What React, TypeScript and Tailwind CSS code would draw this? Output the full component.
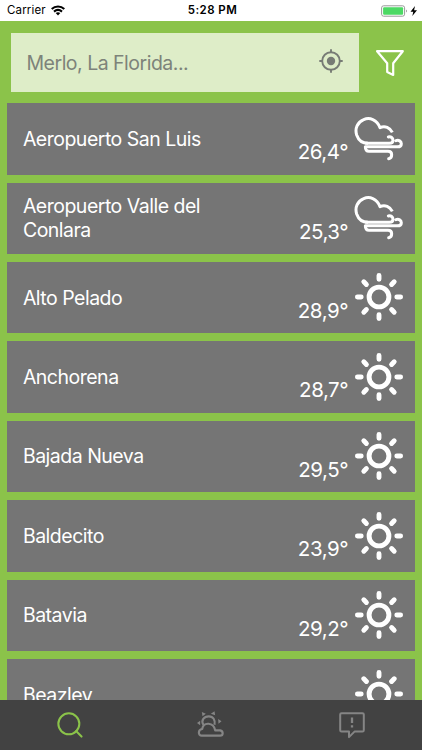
import React from "react";

type Weather = "sun" | "wind";
type Station = { name: string; temp: string; weather: Weather };

const stations: Station[] = [
  { name: "Aeropuerto San Luis", temp: "26,4°", weather: "wind" },
  { name: "Aeropuerto Valle del Conlara", temp: "25,3°", weather: "wind" },
  { name: "Alto Pelado", temp: "28,9°", weather: "sun" },
  { name: "Anchorena", temp: "28,7°", weather: "sun" },
  { name: "Bajada Nueva", temp: "29,5°", weather: "sun" },
  { name: "Baldecito", temp: "23,9°", weather: "sun" },
  { name: "Batavia", temp: "29,2°", weather: "sun" },
  { name: "Beazley", temp: "", weather: "sun" },
];

function SunIcon() {
  return (
    <svg viewBox="0 0 50 50" className="size-[50px]" fill="none" stroke="white" strokeLinecap="round">
      <circle cx="25" cy="25" r="9.9" strokeWidth="4.9" />
      <path
        strokeWidth="4.9"
        d="M25 3.4V7.2M25 42.8V46.6M3.4 25H7.2M42.8 25H46.6M9.8 9.8L12.4 12.4M37.6 37.6L40.2 40.2M40.2 9.8L37.6 12.4M12.4 37.6L9.8 40.2"
      />
    </svg>
  );
}

function WindIcon() {
  return (
    <svg viewBox="192 42 150 150" className="size-[50px]" fill="none" stroke="white" strokeWidth="9" strokeLinejoin="round">
      <path d="M307 97C300 83 285 76 270 83C261 58 238 51 221 59C202 67 194 86 200 105C206 122 218 130 234 130" />
      <path strokeLinecap="round" d="M295 111C303 109 309 114 309 121C309 127 305 130 298 130H228M318 122C326 119 334 124 334 131C334 137 329 140.5 322 140.5H226C226 150 230 154 237 154H294C301 154 305 158 305 164C305 172 301 175 296 176" />
    </svg>
  );
}

function StatusBar() {
  return (
    <header className="grid h-[21px] shrink-0 grid-cols-3 items-center bg-white px-[7px] text-[11.5px] text-black">
      <div className="flex items-center gap-[5px]">
        <span className="tracking-[0.15px]">Carrier</span>
        <svg viewBox="0 0 14 11" className="h-[11px] w-[14px]" fill="none" stroke="black">
          <path strokeWidth="2.1" d="M.7 4C4.2.7 9.8.7 13.3 4M3 6.6C5.4 4.5 8.6 4.5 11 6.6" />
          <path fill="black" stroke="none" d="M4.7 8.1Q7 6.4 9.3 8.1L7 10.5Z" />
        </svg>
      </div>
      <span className="pt-px pl-[3px] text-center font-semibold tracking-[0.45px]">5:28 PM</span>
      <div className="-mr-[3px] flex items-center justify-end">
        <svg viewBox="0 0 37 12" className="h-[12px] w-[37px]">
          <rect x=".6" y=".8" width="23" height="10.4" rx="2" fill="none" stroke="#999" />
          <rect x="2.1" y="2.3" width="20" height="7.4" rx="1" fill="#4cd964" />
          <path d="M25 4.5Q27 6 25 7.5Z" fill="#999" />
          <path d="M34 1L29.5 6.7H32.3L31.3 11L36 5.3H33.1Z" fill="black" />
        </svg>
      </div>
    </header>
  );
}

function SearchBar() {
  return (
    <div className="flex shrink-0 items-center pt-[12px] pl-[10.5px]">
      <div className="flex h-[58.5px] w-[348px] items-center justify-between bg-[#deedc8] pr-[16px] pl-[16px]">
        <span className="pt-[2px] text-[19.5px] tracking-[-0.5px] text-[#7d837a]">Merlo, La Florida...</span>
        <svg viewBox="0 0 24 24" className="-mt-[2px] size-[24px]" fill="none" stroke="#777b75">
          <circle cx="12" cy="12" r="8.8" strokeWidth="1.9" />
          <circle cx="12" cy="12" r="4.2" fill="#777b75" stroke="none" />
          <path strokeWidth="1.9" d="M12 .3V4M12 20V23.7M.3 12H4M20 12H23.7" />
        </svg>
      </div>
      <svg viewBox="0 0 28 26" className="mt-[2px] ml-[17.5px] h-[26px] w-[28px]" fill="none" stroke="white" strokeWidth="2.2" strokeLinejoin="round">
        <path d="M1.1 1.2H26.8L17.2 13.2V24.9L11.2 21.9V13.2Z" />
      </svg>
    </div>
  );
}

function StationCard({ name, temp, weather }: Station) {
  return (
    <li className="flex h-[71.4px] shrink-0 bg-[#757575] pr-[11px] pl-[15.5px] text-white">
      <span className="w-[200px] self-center text-[19.5px] leading-[24px] tracking-[-0.5px]">{name}</span>
      <span className="ml-auto self-end pb-[10.4px] text-[20.5px] leading-[24px] tracking-[-0.45px]">{temp}</span>
      <span className="mt-[10.5px] ml-[5.5px] shrink-0">{weather === "sun" ? <SunIcon /> : <WindIcon />}</span>
    </li>
  );
}

function TabBar() {
  return (
    <nav className="grid h-[50.5px] shrink-0 grid-cols-3 bg-[#424242]">
      <div className="flex justify-center pt-[12px]">
        <svg viewBox="0 0 27 27" className="size-[26px]" fill="none" stroke="#8bc34a" strokeWidth="2.1" strokeLinecap="round">
          <circle cx="12.3" cy="12.3" r="10.9" />
          <path d="M19.8 19.8L25.5 25.5" />
        </svg>
      </div>
      <div className="flex justify-center pt-[11px]">
        <svg viewBox="172 64 80 78" className="h-[26px] w-[27px]" fill="none" stroke="#858585" strokeWidth="6.5" strokeLinejoin="round">
          <path d="M191 106C182 92 193 80 207 80C220 80 227 91 224 105" />
          <path d="M186 138C174 138 174 120 187 118C191 96 221 97 226 122H241C251 124 251 138 241 138Z" />
          <path fill="#858585" stroke="none" d="M186 67L198 72L188 80ZM213 72L224 65L226 77ZM235 88L245 95L236 102ZM171 100L181 93V107Z" />
        </svg>
      </div>
      <div className="flex justify-center pt-[12px]">
        <svg viewBox="0 0 26 27" className="h-[27px] w-[26px]" fill="none" stroke="#858585" strokeWidth="2" strokeLinejoin="round">
          <path d="M2.5 1.2H23.5Q24.8 1.2 24.8 2.5V18.3Q24.8 19.6 23.5 19.6H15.5L10 25.1V19.6H2.5Q1.2 19.6 1.2 18.3V2.5Q1.2 1.2 2.5 1.2Z" />
          <path strokeWidth="2.3" d="M13 5.5V11M13 13.2V15.6" />
        </svg>
      </div>
    </nav>
  );
}

export default function App() {
  return (
    <div className="flex h-[750px] w-[422px] flex-col overflow-hidden bg-[#8bc34a] font-['Inter','Liberation_Sans',sans-serif]">
      <StatusBar />
      <SearchBar />
      <ul className="mt-[11.7px] flex min-h-0 flex-1 flex-col gap-[8px] overflow-hidden px-[7.4px]">
        {stations.map((station) => (
          <StationCard key={station.name} {...station} />
        ))}
      </ul>
      <TabBar />
    </div>
  );
}
